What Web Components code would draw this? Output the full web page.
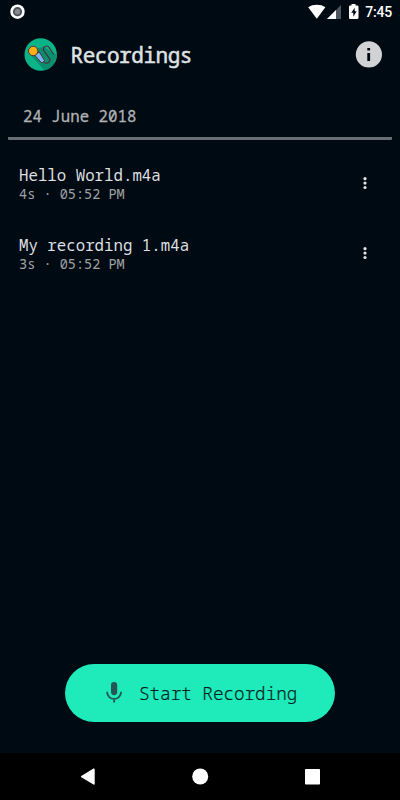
<!DOCTYPE html>
<html lang="en">
<head>
<meta charset="utf-8">
<title>Recordings</title>
<style>
  html, body {
    margin: 0;
    height: 100%;
  }
  body {
    background: #000a12;
    font-family: "Noto Sans Mono", "Droid Sans Mono", "DejaVu Sans Mono", monospace;
  }
</style>
</head>
<body>
<recorder-app>
  <status-bar slot="top">7:45</status-bar>
  <app-header slot="top">Recordings</app-header>
  <day-heading>24 June 2018</day-heading>
  <recording-item>Hello World.m4a<span slot="info">4s · 05:52 PM</span></recording-item>
  <recording-item>My recording 1.m4a<span slot="info">3s · 05:52 PM</span></recording-item>
  <record-button slot="action">Start Recording</record-button>
  <nav-bar slot="bottom"></nav-bar>
</recorder-app>

<script>
// Attach an open shadow root filled with the given markup
function render(element, html) {
  const template = document.createElement("template");
  template.innerHTML = html;
  element.attachShadow({ mode: "open" }).appendChild(template.content.cloneNode(true));
}

class RecorderApp extends HTMLElement {
  constructor() {
    super();
    render(this, `
      <style>
        :host {
          display: flex;
          flex-direction: column;
          height: 100vh;
          overflow: hidden;
        }
        main { flex: 1; }
        .action {
          display: flex;
          justify-content: center;
          padding-bottom: 30.7px;
        }
      </style>
      <slot name="top"></slot>
      <main><slot></slot></main>
      <div class="action"><slot name="action"></slot></div>
      <slot name="bottom"></slot>
    `);
  }
}

class StatusBar extends HTMLElement {
  constructor() {
    super();
    render(this, `
      <style>
        :host {
          display: flex;
          align-items: center;
          justify-content: space-between;
          height: 24px;
          padding: 0 8px 0 10px;
          color: #fff;
          font: 500 14px/24px Roboto, sans-serif;
        }
        svg { display: block; }
        .right { display: flex; align-items: center; }
        .time { margin-left: 6px; letter-spacing: -0.2px; }
      </style>
      <svg width="15" height="24" viewBox="0 0 15 24">
        <circle cx="7.5" cy="11.7" r="7.2" fill="#fff"/>
        <circle cx="7.5" cy="11.7" r="4.6" fill="#4c535a"/>
        <circle cx="7.5" cy="11.7" r="2.7" fill="#858a8e"/>
      </svg>
      <div class="right">
        <svg width="51" height="24" viewBox="0 0 51 24">
          <path d="M0.2 7.3C4.8 4 12.8 4 17.4 7.3L8.8 18.7Z" fill="#fff"/>
          <path d="M33 5V19H19Z" fill="#4d565e"/>
          <path d="M28 10V19H19Z" fill="#fff"/>
          <path d="M43.5 4H47.5V5.5H49.2Q50.5 5.5 50.5 6.8V17.7Q50.5 19 49.2 19H42.2Q41 19 41 17.7V6.8Q41 5.5 42.2 5.5H43.5Z" fill="#fff"/>
          <path d="M46.7 7.7L43.2 12.8H45.3V16.7L48.7 11.3H46.7Z" fill="#000a12"/>
        </svg>
        <span class="time"><slot></slot></span>
      </div>
    `);
  }
}

class AppHeader extends HTMLElement {
  constructor() {
    super();
    render(this, `
      <style>
        :host {
          display: flex;
          align-items: center;
          height: 61px;
          padding: 0 18px 0 24px;
          color: #dfe1e2;
        }
        h1 {
          flex: 1;
          margin: 0 0 0 13.5px;
          font-size: 21px;
          font-weight: 400;
          line-height: 28px;
          letter-spacing: -0.45px;
          -webkit-text-stroke: 0.5px;
        }
        svg { display: block; }
      </style>
      <svg width="33" height="33" viewBox="0 0 33 33">
        <clipPath id="disc"><circle cx="16.7" cy="16.5" r="16.2"/></clipPath>
        <g clip-path="url(#disc)">
          <rect width="33" height="33" fill="#0bb488"/>
          <path d="M5.5 16L21 33H33V17L28.5 14.5L20 9L14 10Z" fill="#078f70"/>
        </g>
        <path d="M20 24.6C23.5 26.5 27.3 23.5 25.4 20.4L20 13.2C17.8 9.6 22.6 6 25.2 9.6L29.3 15.8" fill="none" stroke="#542733" stroke-width="1.1" stroke-linecap="round"/>
        <path d="M10.6 17L15.2 13.9L20.7 22.8L17.7 25Z" fill="#7ab5f5" stroke="#542733" stroke-width="0.9" stroke-linejoin="round"/>
        <circle cx="9.2" cy="13" r="4.7" fill="#ffae13" stroke="#542733" stroke-width="0.9"/>
      </svg>
      <h1><slot></slot></h1>
      <svg width="27" height="27" viewBox="0 0 27 27">
        <circle cx="13.9" cy="13.4" r="13.1" fill="#d0d2d3"/>
        <path d="M12.3 7H15.1V9.5H12.3ZM12.3 12H15.1V20H12.3Z" fill="#000a12"/>
      </svg>
    `);
  }
}

class DayHeading extends HTMLElement {
  constructor() {
    super();
    render(this, `
      <style>
        :host {
          display: block;
          margin: 0 8px 9px;
          padding: 20px 15px 10px;
          border-bottom: 3px solid #6a6d73;
          border-radius: 1px;
          color: #afb1b3;
          font-size: 15.75px;
          line-height: 22px;
          -webkit-text-stroke: 0.3px;
        }
      </style>
      <slot></slot>
    `);
  }
}

class RecordingItem extends HTMLElement {
  constructor() {
    super();
    render(this, `
      <style>
        :host {
          display: flex;
          align-items: center;
          height: 70px;
          padding: 0 33px 0 19px;
        }
        .text { flex: 1; }
        .name {
          color: #dddfe0;
          font-size: 15.75px;
          line-height: 20px;
        }
        .info {
          color: #a0a2a4;
          font-size: 13.55px;
          line-height: 19px;
        }
        svg { display: block; }
      </style>
      <div class="text">
        <div class="name"><slot></slot></div>
        <div class="info"><slot name="info"></slot></div>
      </div>
      <svg width="4" height="14" viewBox="0 0 4 14" fill="#e3e4e5">
        <circle cx="2" cy="1.7" r="1.6"/>
        <circle cx="2" cy="6.1" r="1.6"/>
        <circle cx="2" cy="10.5" r="1.6"/>
      </svg>
    `);
  }
}

class RecordButton extends HTMLElement {
  constructor() {
    super();
    render(this, `
      <style>
        :host { display: block; }
        button {
          display: flex;
          align-items: center;
          box-sizing: border-box;
          width: 270px;
          height: 58.5px;
          padding: 0 0 0 40px;
          border: none;
          border-radius: 30px;
          background: #1eebb9;
          color: #04201f;
          font-family: inherit;
          font-size: 17.6px;
          font-weight: 300;
          line-height: 24px;
          white-space: nowrap;
          -webkit-text-stroke: 0.2px;
        }
        svg { display: block; margin: 0 16px 0 1px; }
      </style>
      <button>
        <svg width="17" height="22" viewBox="0 0 17 22">
          <rect x="5" y="0" width="6.2" height="13.2" rx="3.1" fill="#235954"/>
          <path d="M1.1 9.8C1.1 19.2 15.1 19.2 15.1 9.8M8.1 16.5V20.6" fill="none" stroke="#235954" stroke-width="1.9"/>
        </svg>
        <slot></slot>
      </button>
    `);
  }
}

class NavBar extends HTMLElement {
  constructor() {
    super();
    render(this, `
      <style>
        :host {
          display: flex;
          align-items: center;
          justify-content: space-between;
          height: 47px;
          padding: 0 80px;
          box-sizing: border-box;
          background: #000;
        }
      </style>
      <svg width="15" height="17" viewBox="0 0 15 17">
        <path d="M1.7 8.6L13.9 1.3V15.9Z" fill="#fff" stroke="#fff" stroke-width="1.6" stroke-linejoin="round"/>
      </svg>
      <svg width="17" height="17" viewBox="0 0 17 17">
        <circle cx="8.2" cy="8.5" r="8" fill="#fff"/>
      </svg>
      <svg width="15" height="17" viewBox="0 0 15 17">
        <rect x="0" y="1" width="15" height="15.5" rx="0.8" fill="#fff"/>
      </svg>
    `);
  }
}

customElements.define("recorder-app", RecorderApp);
customElements.define("status-bar", StatusBar);
customElements.define("app-header", AppHeader);
customElements.define("day-heading", DayHeading);
customElements.define("recording-item", RecordingItem);
customElements.define("record-button", RecordButton);
customElements.define("nav-bar", NavBar);
</script>
</body>
</html>
